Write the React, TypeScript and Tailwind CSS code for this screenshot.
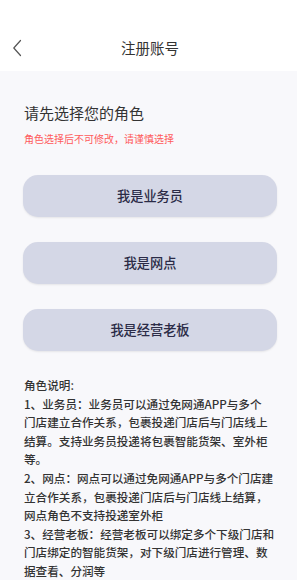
const roles = ["我是业务员", "我是网点", "我是经营老板"];

export default function App() {
  return (
    <div
      className="w-[300px] h-[580px] overflow-hidden bg-white"
      style={{ fontFamily: '"Noto Sans CJK SC", "Noto Sans", sans-serif' }}
    >
      {/* Header */}
      <div className="h-[71px] pt-[24px] bg-white">
        <div className="relative h-[47px] flex items-center justify-center">
          <button className="absolute left-[10px] top-[13px] p-[2px]">
            <svg width="10" height="18" viewBox="0 0 10 18" fill="none">
              <path d="M8.5 1.5L1.8 9l6.7 7.5" stroke="#555" strokeWidth="1.2" strokeLinecap="round" strokeLinejoin="round" />
            </svg>
          </button>
          <span className="text-[14.5px] text-[#333]">注册账号</span>
        </div>
      </div>

      {/* Body */}
      <div className="h-[509px] bg-[#f8f8fb] border-r-[3px] border-white pl-[23px] pr-[20px] pt-[32px]">
        <h1 className="text-[15px] leading-[20px] text-[#333] pl-[1px]">请先选择您的角色</h1>
        <p className="mt-[8px] text-[10px] leading-[15px] text-[#ff5b5b] pl-[1px]">角色选择后不可修改，请谨慎选择</p>

        <div className="mt-[29px] flex flex-col gap-[25px]">
          {roles.map((r) => (
            <button
              key={r}
              className="h-[42px] w-full rounded-[15px] bg-[#d4d7e6] shadow-[0_1px_2px_rgba(0,0,0,0.08)] text-[13.2px] font-medium text-[#2b2b47]"
            >
              {r}
            </button>
          ))}
        </div>

        {/* Role notes */}
        <div className="mt-[25px] pl-[1px] w-[252px] text-[11.6px] leading-[18.6px] font-medium text-[#333]">
          <p>角色说明:</p>
          <p>
            1、业务员：业务员可以通过免网通APP与多个
            <br />
            门店建立合作关系，包裹投递门店后与门店线上结算。支持业务员投递将包裹智能货架、室外柜等。
          </p>
          <p>2、网点：网点可以通过免网通APP与多个门店建立合作关系，包裹投递门店后与门店线上结算，网点角色不支持投递室外柜</p>
          <p>3、经营老板：经营老板可以绑定多个下级门店和门店绑定的智能货架，对下级门店进行管理、数据查看、分润等</p>
        </div>
      </div>
    </div>
  );
}
